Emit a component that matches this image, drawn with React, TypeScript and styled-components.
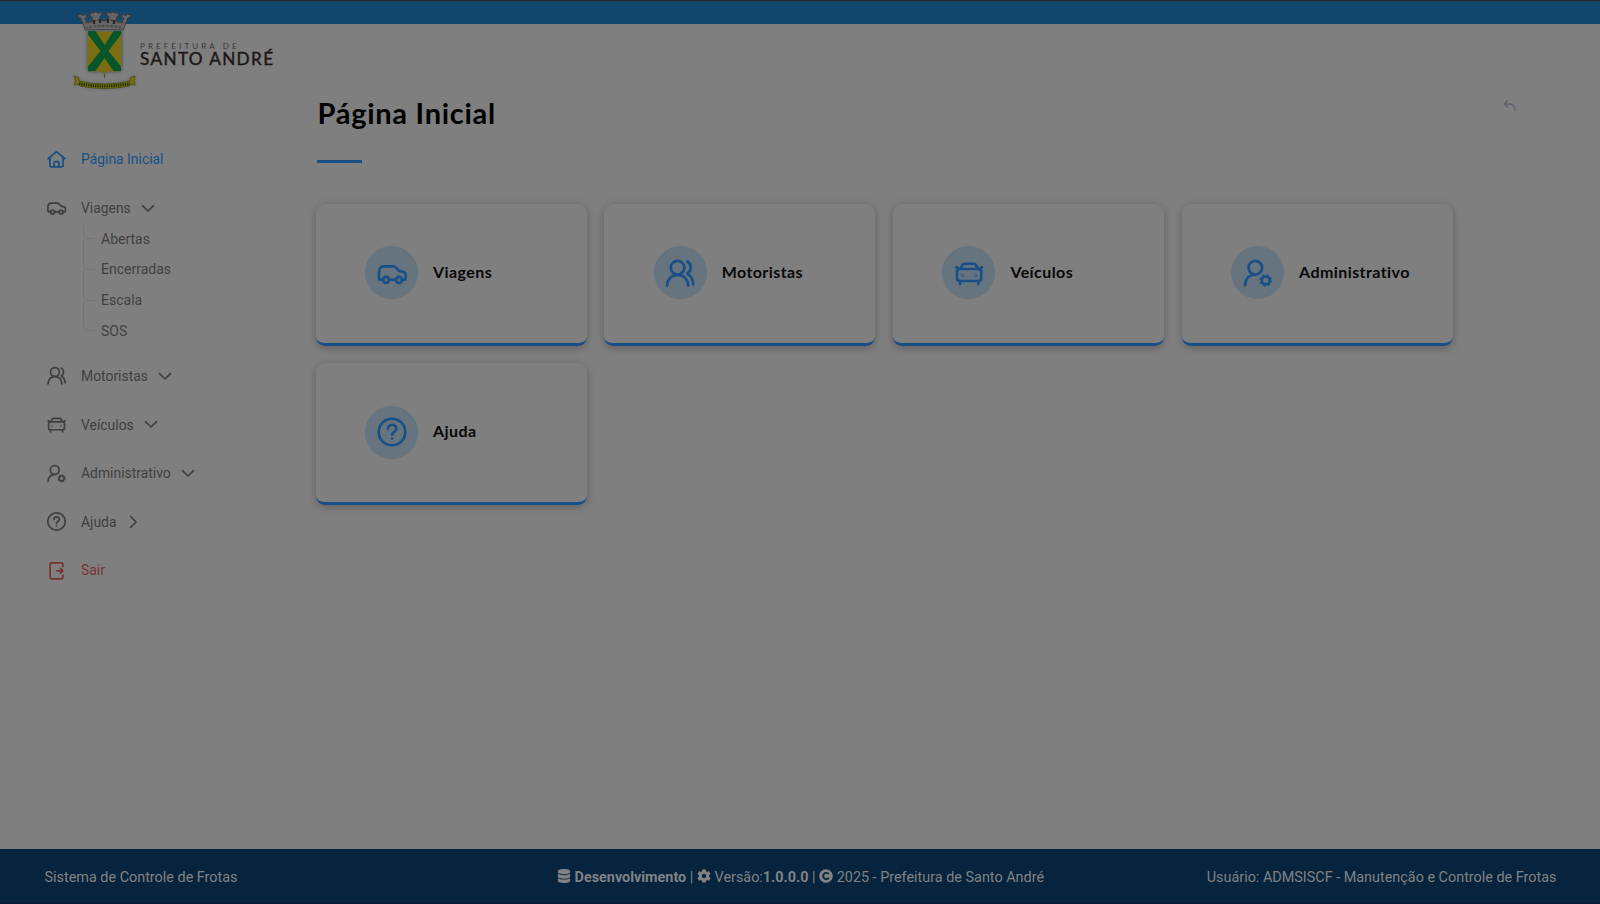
import React from 'react';
import styled, { createGlobalStyle } from 'styled-components';
import { FaCog, FaCopyright, FaDatabase } from 'react-icons/fa';

const accent = '#184f86';
const ink = '#3f3f3f';

const GlobalStyle = createGlobalStyle`
  * { box-sizing: border-box; }
  body { margin: 0; background: #7f7f7f; font-family: Roboto, "Liberation Sans", sans-serif; }
`;

const Page = styled.div`
  display: flex;
  flex-direction: column;
  height: 904px;
  overflow: hidden;
`;

const TopBar = styled.header`
  flex: none;
  height: 24px;
  background: #11476c;
  border-top: 1px solid #252525;
`;

const Body = styled.div`
  flex: 1;
  display: flex;
  min-height: 0;
`;

const Sidebar = styled.aside`
  width: 315.5px;
  flex: none;
`;

const Brand = styled.div`
  position: relative;
  display: flex;
  height: 72px;
  margin: -16px 0 0 72px;
`;

const BrandText = styled.div`
  padding: 34px 0 0 2px;
  color: #1c1716;
  font-family: Lato, sans-serif;
  white-space: nowrap;
`;

const BrandSmall = styled.div`
  font-size: 8px;
  line-height: 8px;
  letter-spacing: 3.1px;
  color: #383635;
`;

const BrandName = styled.div`
  margin-top: -1px;
  font-size: 17.2px;
  line-height: 20px;
  letter-spacing: 1.35px;
  -webkit-text-stroke: 0.4px #1c1716;
`;

const Nav = styled.nav`
  padding: 55px 0 0 46px;
`;

const NavItem = styled.a<{ $color?: string }>`
  display: flex;
  align-items: center;
  height: 48.6px;
  color: ${(p) => p.$color ?? ink};
  font-size: 13.9px;
  white-space: nowrap;
`;

const NavLabel = styled.span`
  margin-left: 14px;
  padding-top: 0.4px;
`;

const Chevron = styled.svg<{ $side?: boolean }>`
  width: 14px;
  height: 14px;
  margin-left: 10px;
  transform: ${(p) => (p.$side ? 'rotate(-90deg)' : 'none')};
`;

const SubMenu = styled.ul`
  list-style: none;
  margin: -8.6px 0 5.6px 37px;
  padding: 0;
`;

const SubItem = styled.li`
  display: flex;
  height: 30.6px;
  align-items: center;
  font-size: 14px;
  color: ${ink};
`;

const Branch = styled.svg`
  width: 12px;
  height: 31px;
  margin-right: 6px;
  overflow: visible;
`;

const Main = styled.main`
  flex: 1;
  padding: 71px 83.5px 0 0;
`;

const TitleRow = styled.div`
  display: flex;
  justify-content: space-between;
  height: 65px;
`;

const Title = styled.h1`
  margin: -1px 0 0 2px;
  font: 700 29px/37px Lato, sans-serif;
  letter-spacing: 0.72px;
  color: #000;
`;

const BackArrow = styled.svg`
  width: 14px;
  height: 12px;
  margin-top: 5px;
`;

const Rule = styled.div`
  width: 45px;
  height: 3px;
  margin-left: 1px;
  background: ${accent};
`;

const Grid = styled.div`
  display: grid;
  grid-template-columns: repeat(4, 271px);
  grid-auto-rows: 142px;
  gap: 17.5px 17.7px;
  margin-top: 40.6px;
`;

const Card = styled.a`
  display: flex;
  align-items: center;
  padding: 0 0 1px 49.5px;
  border-radius: 9px;
  border-bottom: 3px solid ${accent};
  background: #7f7f7f;
  box-shadow: 0 2px 8px rgba(0, 0, 0, 0.26);
`;

const IconDisc = styled.span`
  display: grid;
  place-items: center;
  width: 53px;
  height: 53px;
  border-radius: 50%;
  background: #66747f;
  color: ${accent};
`;

const CardLabel = styled.span`
  margin-left: 15px;
  padding-bottom: 2px;
  font: 700 16px/22px Lato, sans-serif;
  letter-spacing: 0.42px;
  color: #080808;
`;

const Footer = styled.footer`
  flex: none;
  display: grid;
  grid-template-columns: 1fr auto 1fr;
  align-items: center;
  height: 55px;
  padding: 3px 43.5px 0 44.5px;
  background: #07243e;
  border-bottom: 2px solid #061e35;
  color: #808284;
  font-size: 14.4px;
  white-space: nowrap;
`;

const FooterMid = styled.div`
  display: flex;
  align-items: center;
  gap: 3.6px;
  svg { flex: none; margin-top: -2px; }
`;

const FooterEnd = styled.div`
  text-align: right;
`;

type IconName = 'home' | 'car' | 'users' | 'front' | 'admin' | 'help' | 'exit';

const drawings: Record<IconName, React.ReactNode> = {
  home: (
    <>
      <path d="M3.2 14.8 16 4l12.8 10.8M6 13v12a2.3 2.3 0 0 0 2.3 2.3h15.4A2.3 2.3 0 0 0 26 25V13" />
      <path d="M12.3 27v-6.3a1.4 1.4 0 0 1 1.4-1.4h4.6a1.4 1.4 0 0 1 1.4 1.4V27" />
    </>
  ),
  car: (
    <>
      <path d="M7 22.7H4.2a1.2 1.2 0 0 1-1.2-1.2V15c0-3.4 2-5.7 5-5.7h9.2c1 0 1.8.4 2.5 1.1l2.6 2.7c.6.6 1.2.9 2 1.1l3.2.8a2.9 2.9 0 0 1 2.1 2.8v3.700c0 .7-.5 1.2-1.2 1.2H26M13 22.7h7" />
      <circle cx="10" cy="22.900" r="3" />
      <circle cx="23" cy="22.900" r="3" />
    </>
  ),
  users: (
    <>
      <circle cx="13.600" cy="10.700" r="6.800" />
      <path d="M3 28.700C3.600 22 7.700 17.800 13.600 17.800S23.700 22 24.300 28.700M23.300 4.500c4.300 2.400 4.700 9.300 0 12.100 3.700 2.200 5.700 6 6 10.700" />
    </>
  ),
  front: (
    <>
      <path d="m7.700 11.900 1.700-4c.4-.8 1-1.200 1.900-1.200h9.700c.9 0 1.600.4 1.900 1.200l1.800 4M3.300 10.200l2.400 1.500M28.900 10.200l-2.400 1.500" />
      <rect x="4" y="12" width="24.200" height="12" rx="2.700" />
      <path d="M7 24.500v2.600M25.300 24.500v2.600" />
      <circle cx="9.500" cy="18.300" r=".3" />
      <circle cx="22.700" cy="18.300" r=".3" />
    </>
  ),
  admin: (
    <>
      <circle cx="13.300" cy="10.700" r="6.800" />
      <path d="M3 28.200C3.500 21.700 7.500 17.700 13.300 17.700" />
      <circle cx="23.700" cy="23.400" r="3.900" />
      <circle cx="23.700" cy="23.400" r="5.400" strokeDasharray="2.120 2.120" strokeWidth="1.700" strokeLinecap="butt" />
    </>
  ),
  help: (
    <>
      <circle cx="16" cy="16" r="13.300" />
      <path d="M12 12.600c.2-5.200 8.300-5 8.300.1 0 3.200-4.200 3.200-4.200 6M16.100 22.500v.1" />
    </>
  ),
  exit: (
    <path d="M25.700 10V6.700a2.400 2.400 0 0 0-2.400-2.400H8.700a2.400 2.400 0 0 0-2.400 2.400v19.600a2.400 2.400 0 0 0 2.400 2.400h14.600a2.400 2.400 0 0 0 2.400-2.400V23M16.500 16.500h9m-3.300-3.600 3.500 3.600-3.500 3.600" />
  ),
};

function Icon({ name, size }: { name: IconName; size: number }) {
  return (
    <svg width={size} height={size} viewBox="0 0 32 32" fill="none" stroke="currentColor"
      strokeWidth={2.65} strokeLinecap="round" strokeLinejoin="round">
      {drawings[name]}
    </svg>
  );
}

function Crest() {
  return (
    <svg width="66" height="84" viewBox="0 0 66 84" style={{ filter: 'drop-shadow(0 0 1.5px #44505a88)' }}>
      {/* mural crown */}
      <path d="M13 22 8 9 5.500 8 5 5h4l1 1.500 4-2 .5 4-2.500 1 3 5 6-2-1-5-2-1V3l3 .5L24 2l3 1.500L31 2l-.5 4-2 1 .5 5h9l.5-5-2-1-.5-4 4 1.500L43 2l3 1.500 3-.5v3.500l-2 1-1 5 6 2 3-5-2.500-1 .5-4 4 2L58 5h4l-.5 3L59 9l-5 13Z" transform="translate(1.500 2) scale(.92 .9)" fill="#656565" stroke="#333" strokeWidth=".8" />
      <path d="M13 15c10-4 29-4 39 0M13 20c10-3 27-3 37 0" fill="none" stroke="#474747" strokeWidth="1.300" strokeDasharray="3 1.200" />
      <path d="M22 12v4M28 11v4M36 11v4M42 12v4" stroke="#262626" strokeWidth="2.200" />
      {/* shield */}
      <path d="M15 23h35v38q0 3-4 3H36l-3.500 2-3.500-2H19q-4 0-4-3Z" fill="#7c6e10" stroke="#5d6872" strokeWidth="1" />
      <path d="M16 23h7.500l9 14 9-14H49v3.500L36.500 43 49 58.500V63h-7.500l-9-13-9 13H16v-4.500L28.500 43 16 26.500Z" fill="#07562b" />
      <path d="M32.500 66v4" stroke="#514f32" />
      {/* motto ribbon */}
      <path d="m2 68 5 2v3q25 6 51 0v-3l5-2-1 5 1 4-5-1-1 2q-25 5-49 0l-1-2-5 1 2-4Z" fill="#77720d" stroke="#474d0a" strokeWidth=".8" />
      <path d="M7 75.500q25 5 51 0" fill="none" stroke="#29360c" strokeWidth="3" strokeDasharray="1.500 .8" />
    </svg>
  );
}

function Arrow({ side }: { side?: boolean }) {
  return (
    <Chevron $side={side} viewBox="0 0 14 14" fill="none" stroke="currentColor" strokeWidth="1.700" strokeLinecap="round" strokeLinejoin="round">
      <path d="m1.500 4.600 5.500 5.400 5.500-5.400" />
    </Chevron>
  );
}

const trips = ['Abertas', 'Encerradas', 'Escala', 'SOS'];

const cards: { icon: IconName; label: string }[] = [
  { icon: 'car', label: 'Viagens' },
  { icon: 'users', label: 'Motoristas' },
  { icon: 'front', label: 'Veículos' },
  { icon: 'admin', label: 'Administrativo' },
  { icon: 'help', label: 'Ajuda' },
];

export default function App() {
  return (
    <Page>
      <GlobalStyle />
      <TopBar />
      <Body>
        <Sidebar>
          <Brand>
            <Crest />
            <BrandText>
              <BrandSmall>PREFEITURA DE</BrandSmall>
              <BrandName>SANTO ANDRÉ</BrandName>
            </BrandText>
          </Brand>
          <Nav>
            <NavItem $color={accent}><Icon name="home" size={21} /><NavLabel>Página Inicial</NavLabel></NavItem>
            <NavItem><Icon name="car" size={21} /><NavLabel>Viagens</NavLabel><Arrow /></NavItem>
            <SubMenu>
              {trips.map((trip, i) => (
                <SubItem key={trip}>
                  <Branch viewBox="0 0 12 31" fill="none" stroke="#737373">
                    <path d={`M.5 ${i === 0 ? 2 : -15}V10q0 5.500 5.500 5.500H11.500`} />
                  </Branch>
                  {trip}
                </SubItem>
              ))}
            </SubMenu>
            <NavItem><Icon name="users" size={21} /><NavLabel>Motoristas</NavLabel><Arrow /></NavItem>
            <NavItem><Icon name="front" size={21} /><NavLabel>Veículos</NavLabel><Arrow /></NavItem>
            <NavItem><Icon name="admin" size={21} /><NavLabel>Administrativo</NavLabel><Arrow /></NavItem>
            <NavItem><Icon name="help" size={21} /><NavLabel>Ajuda</NavLabel><Arrow side /></NavItem>
            <NavItem $color="#783232"><Icon name="exit" size={21} /><NavLabel>Sair</NavLabel></NavItem>
          </Nav>
        </Sidebar>
        <Main>
          <TitleRow>
            <Title>Página Inicial</Title>
            <BackArrow viewBox="0 0 14 12" fill="none" stroke="#5c616b" strokeWidth="1.500" strokeLinecap="round" strokeLinejoin="round">
              <path d="M4.200 1 1.500 4l2.700 2.800M1.800 4H7q4.600.3 5.300 6.300" />
            </BackArrow>
          </TitleRow>
          <Rule />
          <Grid>
            {cards.map(({ icon, label }) => (
              <Card key={label}>
                <IconDisc><Icon name={icon} size={32} /></IconDisc>
                <CardLabel>{label}</CardLabel>
              </Card>
            ))}
          </Grid>
        </Main>
      </Body>
      <Footer>
        <div>Sistema de Controle de Frotas</div>
        <FooterMid>
          <FaDatabase size={14} /><b>Desenvolvimento</b>|<FaCog size={14} />
          <span>Versão:<b>1.0.0.0</b></span>|<FaCopyright size={14} />
          <span>2025 - Prefeitura de Santo André</span>
        </FooterMid>
        <FooterEnd>Usuário: ADMSISCF - Manutenção e Controle de Frotas</FooterEnd>
      </Footer>
    </Page>
  );
}
